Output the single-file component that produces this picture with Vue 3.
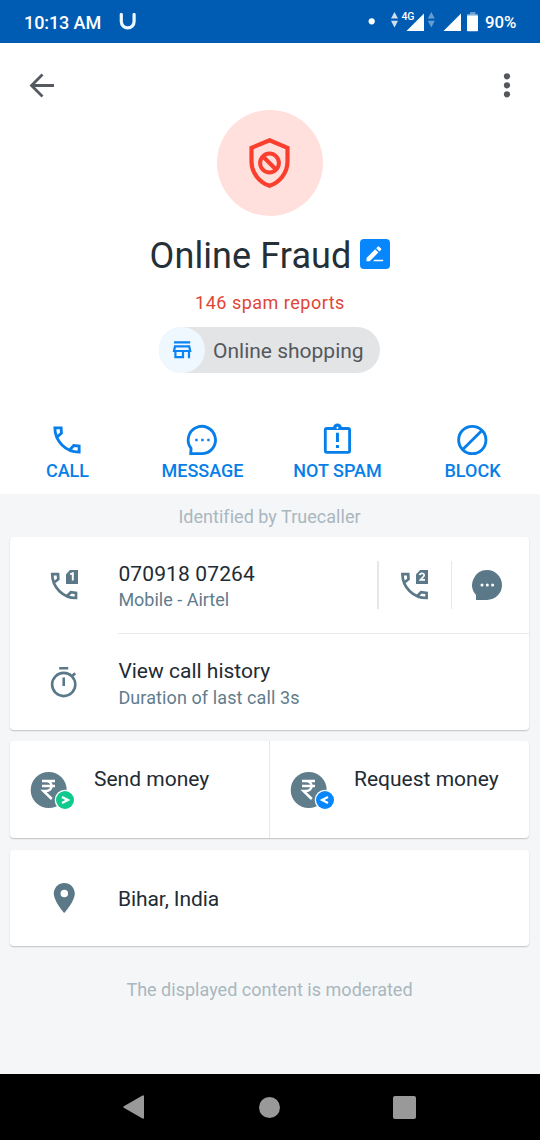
<script setup>
const actions = [
  { id: 'call', label: 'CALL' },
  { id: 'message', label: 'MESSAGE' },
  { id: 'notspam', label: 'NOT SPAM' },
  { id: 'block', label: 'BLOCK' },
]
</script>

<template>
  <div class="screen">
    <header class="status">
      <span class="clock">10:13 AM</span>
      <svg class="u-logo" width="18" height="18" viewBox="0 0 18 18"><path d="M2.300 1.500V8.500a6.400 6.400 0 0 0 12.800 0V1.500" fill="none" stroke="#eaf8ff" stroke-width="3.200" stroke-linecap="round" /></svg>
      <svg class="signals" width="112" height="43" viewBox="368 0 112 43" fill="#fff">
        <circle cx="371.700" cy="21.300" r="3.100" />
        <g opacity=".8"><path d="M391 18.500L394.500 12L398 18.500zM391 20.800h7L394.500 27.500z" /></g>
        <text x="401.400" y="20" class="net">4G</text>
        <path d="M424 13.500V31h-17.500z" />
        <g opacity=".4"><path d="M427.800 18.500L431.300 12L434.800 18.500zM427.800 20.800h7L431.300 27.500z" /></g>
        <path d="M461 13.500V31h-17.500z" />
        <path d="M470 12h5.500v2.500h-5.500z" opacity=".4" /><path d="M467 14h11v2h-11z" opacity=".4" />
        <rect x="467" y="15.500" width="11" height="15.700" rx=".7" />
      </svg>
      <span class="battery">90%</span>
    </header>

    <section class="profile">
      <div class="toolbar">
        <svg width="26" height="26" viewBox="0 0 26 26"><path d="M25 13.500H3M13.500 2.500L2.500 13.500l11 11" fill="none" stroke="#555a61" stroke-width="2.800" /></svg>
        <svg width="8" height="26" viewBox="0 0 8 26" fill="#54585d"><circle cx="4" cy="4.300" r="3.100" /><circle cx="4" cy="13.300" r="3.100" /><circle cx="4" cy="22.300" r="3.100" /></svg>
      </div>
      <div class="avatar">
        <svg width="42" height="52" viewBox="0 0 42 52" fill="none" stroke="#fa3f2f">
          <path d="M20.500 3.200L38.500 10.900V24.500C38.500 36 30.500 45.500 20.500 48.800C10.500 45.500 2.500 36 2.500 24.500V10.900z" stroke-width="4.200" />
          <circle cx="20.500" cy="26" r="9.400" stroke-width="4" />
          <path d="M14 19.500L27 32.500" stroke-width="4" />
        </svg>
      </div>
      <div class="title-row">
        <h1>Online Fraud</h1>
        <span class="edit">
          <svg width="30" height="30" viewBox="0 0 30 30" fill="#fff"><path d="M6.500 22.200V19L15.200 10.300L18.400 13.500L9.700 22.200zM16.200 9.300L17.800 7.700a1 1 0 0 1 1.400 0L21 9.500a1 1 0 0 1 0 1.400L19.400 12.500z" /><path d="M14.500 20.700H23.200V22.200H13z" /></svg>
        </span>
      </div>
      <p class="reports">146 spam reports</p>
      <div class="chip">
        <span class="chip-icon">
          <svg width="20" height="18" viewBox="0 0 20 18" fill="none" stroke="#0a84f5" stroke-width="2.200"><path d="M2 1.300H18.200M3 5.400H17.200L18.200 10H2zM3.400 10V16.200H11V10M17 10V17.300" /></svg>
        </span>
        <span class="chip-text">Online shopping</span>
      </div>
      <nav class="actions">
        <div v-for="a in actions" :key="a.id" class="action">
          <svg width="36" height="36" viewBox="0 0 24 24" fill="none" stroke="#087fe8" stroke-width="1.900">
            <path v-if="a.id === 'call'" d="M5.800 9.700L8.300 7.400L8.100 3.900H3.900C3.900 12.800 11.200 20.100 20.100 20.100V16.100L16.500 15.700L14.200 18.200" />
            <template v-else-if="a.id === 'message'">
              <path d="M4.700 17.600A9.100 9.100 0 1 1 12.300 21.100H4.500z" />
              <path d="M7.500 12h1.600M11.500 12h1.600M15.500 12h1.600" stroke-width="1.600" />
            </template>
            <template v-else-if="a.id === 'notspam'">
              <rect x="4.200" y="4.300" width="16.200" height="15.900" rx="1" />
              <path d="M9.300 4A3 3 0 0 1 15.300 4z" fill="#087fe8" stroke="none" /><circle cx="12.300" cy="3.900" r=".7" fill="#fff" stroke="none" />
              <path d="M12.300 7.200v6.200M12.300 15.400v2" stroke-width="2" />
            </template>
            <g v-else><circle cx="12.200" cy="12" r="9.100" /><path d="M5.800 18.400L18.600 5.600" /></g>
          </svg>
          <span>{{ a.label }}</span>
        </div>
      </nav>
    </section>

    <main>
      <p class="identified">Identified by Truecaller</p>
      <section class="card">
        <div class="row">
          <div class="lead">
            <svg width="30" height="32" viewBox="0 0 30 32">
              <path d="M5.800 13L9.300 10.200L9 5.100H3.200C3.200 18.300 14 29 27 29V24L21.800 23.200L18.300 26.700" fill="none" stroke="#5b7889" stroke-width="2.700" />
              <path d="M17 5.200L21 1H29V15H17z" fill="#5b7889" />
              <path d="M21.200 5.300L23.800 4.200V11.500" fill="none" stroke="#fff" stroke-width="1.900" />
            </svg>
          </div>
          <div class="text"><div class="main number">070918 07264</div><div class="sub">Mobile - Airtel</div></div>
          <div class="side first">
            <svg width="30" height="32" viewBox="0 0 30 32">
              <path d="M5 13L8.500 10.200L8.200 5.100H2.400C2.400 18.300 13.400 29 26.600 29V24L21 23.200L17.500 26.700" fill="none" stroke="#5b7889" stroke-width="2.700" />
              <path d="M16 5.200L20.200 1H28V15H16z" fill="#5b7889" />
              <path d="M19.700 6.200C20 3.700 24.300 3.800 24.200 6.200C24.100 7.700 21.800 9 20.500 10.800H25" fill="none" stroke="#fff" stroke-width="1.700" />
            </svg>
          </div>
          <div class="side">
            <svg width="30" height="30" viewBox="0 0 30 30"><path d="M15 0A15 15 0 0 1 15 30H4V25A15 15 0 0 1 15 0z" fill="#5b7889" /><g fill="#fff"><circle cx="10" cy="15" r="1.500" /><circle cx="15.300" cy="15" r="1.500" /><circle cx="20.600" cy="15" r="1.500" /></g></svg>
          </div>
        </div>
        <div class="rule"></div>
        <div class="row">
          <div class="lead">
            <svg width="28" height="32" viewBox="0 0 28 32" fill="none" stroke="#5b7889" stroke-width="2.600"><circle cx="13.700" cy="18.500" r="11.600" /><path d="M9.200 2.300h9M22.500 9.800L25.200 7.200M13.700 11.500v8.500" /></svg>
          </div>
          <div class="text"><div class="main">View call history</div><div class="sub duration">Duration of last call 3s</div></div>
        </div>
      </section>

      <section class="card money">
        <div v-for="kind in ['Send', 'Request']" :key="kind" class="pay">
          <svg width="46" height="40" viewBox="0 0 46 40">
            <circle cx="18.700" cy="19" r="18" fill="#607d8b" />
            <path d="M12 10.100H25M12 15.100H25M12 10.100H16C23.400 10.100 23.400 20 16 20H13.500L21.800 28" fill="none" stroke="#fff" stroke-width="2.500" />
            <circle cx="35" cy="29" r="10.300" fill="#fff" />
            <circle cx="35" cy="29" r="9" :fill="kind === 'Send' ? '#10c98c' : '#0787fb'" />
            <path :d="kind === 'Send' ? 'M32 26L37.800 29L32 32' : 'M38 26L32.200 29L38 32'" fill="none" stroke="#fff" stroke-width="2.300" />
          </svg>
          <span class="main">{{ kind }} money</span>
        </div>
      </section>

      <section class="card place">
        <div class="lead"><svg width="36" height="36" viewBox="0 0 24 24" fill="#5b7889"><path d="M12.200 2C8.330 2 5.200 5.130 5.200 9c0 5.250 7 13 7 13s7-7.750 7-13c0-3.870-3.130-7-7-7zm0 9.500a2.500 2.500 0 0 1 0-5 2.500 2.500 0 0 1 0 5z" /></svg></div>
        <span class="main">Bihar, India</span>
      </section>
      <p class="moderated">The displayed content is moderated</p>
    </main>

    <footer class="navbar">
      <svg width="24" height="26" viewBox="0 0 24 26"><path d="M2.300 13L21 2.300V23.700z" fill="#999" stroke="#999" stroke-width="2" stroke-linejoin="round" /></svg>
      <span class="home"></span>
      <span class="recent"></span>
    </footer>
  </div>
</template>

<style>
body { margin: 0; }
</style>

<style scoped>
.screen { width: 540px; height: 1140px; display: flex; flex-direction: column; background: #f5f6f8; font-family: Roboto, "Liberation Sans", sans-serif; overflow: hidden; }
p, h1 { margin: 0; font-weight: 400; }
svg { display: block; flex: none; }
.status { height: 43px; flex: none; display: flex; align-items: center; background: #005cb3; color: #fff; box-sizing: border-box; padding: 0 24px; font-size: 18px; font-weight: 500; }
.clock { width: 95px; padding-top: 2px; white-space: nowrap; letter-spacing: -.1px; }
.signals { margin-left: auto; }
.net { font-size: 10.500px; font-weight: 500; }
.battery { width: 36px; padding-left: 5px; padding-top: 1px; font-size: 16.800px; box-sizing: border-box; }
.u-logo { margin-top: 1px; }
.profile { height: 451px; flex: none; background: #fff; display: flex; flex-direction: column; align-items: center; }
.toolbar { width: 100%; height: 67px; box-sizing: border-box; padding: 29px 29px 0; display: flex; justify-content: space-between; }
.avatar { width: 106px; height: 106px; flex: none; border-radius: 50%; background: #ffe0dd; display: flex; align-items: center; justify-content: center; }
.title-row { margin-top: 18px; height: 44px; display: flex; align-items: center; gap: 9px; }
h1 { font-size: 36px; line-height: 44px; color: #252f38; letter-spacing: .1px; }
.edit { width: 30px; height: 30px; margin-bottom: 4px; border-radius: 4px; background: #0787fb; }
.reports { margin-top: 13px; font-size: 18px; line-height: 24px; letter-spacing: .5px; color: #df4538; }
.chip { margin: 12px 1px 0 0; height: 46px; width: 221px; border-radius: 23px; background: #e3e4e6; display: flex; align-items: center; }
.chip-icon { width: 46px; height: 46px; border-radius: 50%; background: #eff8ff; display: flex; align-items: center; justify-content: center; margin-right: 8px; }
.chip-text { font-size: 21px; color: #54585d; white-space: nowrap; padding-top: 2px; }
.actions { width: 100%; margin-top: 49px; display: flex; }
.action { width: 135px; display: flex; flex-direction: column; align-items: center; color: #087fe8; font-size: 18px; font-weight: 500; }
.action svg { margin-right: 1px; }
.action span { line-height: 26px; }
main { flex: 1; padding: 0 11px 0 10px; }
.identified { height: 43px; line-height: 46px; text-align: center; font-size: 18px; color: #a9b7bf; letter-spacing: .03px; }
.card { background: #fff; border-radius: 4px; box-shadow: 0 1px 1.500px rgba(50, 60, 70, .28); }
.card:first-of-type { height: 193px; }
.row { height: 96px; display: flex; }
.lead { width: 108px; flex: none; display: flex; align-items: center; justify-content: center; }
.text { flex: 1; padding: 24px 0 0 .4px; }
.main { font-size: 21px; line-height: 26px; color: #222b33; white-space: nowrap; }
.number { letter-spacing: .13px; }
.sub { font-size: 18px; line-height: 26px; color: #617c8c; white-space: nowrap; }
.duration { letter-spacing: .1px; padding-top: 1px; }
.side { width: 78.500px; height: 48px; margin-top: 24px; box-sizing: border-box; border-left: 1px solid #e5e7e9; display: flex; align-items: center; justify-content: center; padding-right: 6px; }
.side.first { width: 74px; border-left-width: 2px; padding-right: 0; }
.rule { height: 1px; margin-left: 108px; background: #e8eaec; }
.money { height: 97px; margin-top: 11px; display: flex; }
.pay { width: 259px; box-sizing: border-box; padding: 25px 0 0 20px; display: flex; gap: 18px; }
.pay svg { margin-top: 5px; }
.pay + .pay { border-left: 1px solid #e5e7e9; flex: 1; padding-left: 20px; }
.place { height: 96px; margin-top: 12px; display: flex; align-items: center; }
.place .main { padding-top: 2px; letter-spacing: -.08px; }
.moderated { margin-top: 30px; text-align: center; font-size: 18px; line-height: 28px; color: #a9b7bf; letter-spacing: .02px; }
.navbar { height: 66px; flex: none; background: #000; display: flex; align-items: center; justify-content: space-between; padding: 0 124px 0 122px; }
.home { width: 21px; height: 21px; border-radius: 50%; background: #999; }
.recent { width: 23px; height: 23px; border-radius: 2px; background: #999; }
</style>
